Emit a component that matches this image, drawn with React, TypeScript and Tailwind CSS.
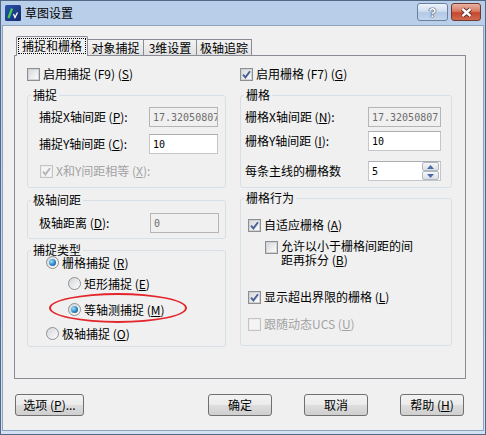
import type { ReactNode } from "react";

const ui = "font-['Noto_Sans_CJK_SC','Noto_Sans',sans-serif]";
const mono = "font-['DejaVu_Sans_Mono',monospace] text-[10px]";

function Check({ checked, disabled }: { checked?: boolean; disabled?: boolean }) {
  return (
    <span
      className={`flex h-[13px] w-[13px] shrink-0 items-center justify-center border bg-white ${
        disabled ? "border-[#c4c4c4]" : "border-[#8e8f8f]"
      }`}
    >
      <span
        className={`flex h-[11px] w-[11px] items-center justify-center border ${
          disabled
            ? "border-[#ececec] bg-[#f4f4f4]"
            : "border-[#cfd3d8] bg-gradient-to-br from-[#d8dadd] to-[#fbfbfb]"
        }`}
      >
        {checked && (
          <svg width="9" height="9" viewBox="0 0 9 9">
            <path
              d="M1 4.6 L3.4 7.4 L8 1.2"
              fill="none"
              stroke={disabled ? "#b4b4b4" : "#4b5f95"}
              strokeWidth="1.9"
            />
          </svg>
        )}
      </span>
    </span>
  );
}

function Radio({ checked }: { checked?: boolean }) {
  return (
    <span className="flex h-[13px] w-[13px] shrink-0 items-center justify-center rounded-full border border-[#8e8f8f] bg-gradient-to-br from-[#d4d6d9] to-[#fdfdfd]">
      {checked && (
        <span className="h-[7px] w-[7px] rounded-full bg-[radial-gradient(circle_at_35%_35%,#9fe0fb,#2a86c8_55%,#0f3f6e)]" />
      )}
    </span>
  );
}

function Field({ value, disabled, w }: { value: string; disabled?: boolean; w: string }) {
  return (
    <div
      className={`flex h-[20px] ${w} shrink-0 items-center overflow-hidden whitespace-nowrap border pl-[3px] ${mono} ${
        disabled
          ? "border-[#b5b5b5] bg-[#f0f0f0] text-[#6d6d6d]"
          : "border-[#c3c6cb] border-t-[#abadb3] bg-white text-black"
      }`}
    >
      {value}
    </div>
  );
}

function SpinBtn({ up }: { up?: boolean }) {
  return (
    <div className="flex h-[9px] w-[17px] items-center justify-center rounded-[2px] border border-[#b2b8c1] bg-gradient-to-b from-[#f7f7f7] to-[#dcdfe3]">
      <svg width="7" height="4" viewBox="0 0 7 4">
        <path d={up ? "M0 4 L3.5 0 L7 4 Z" : "M0 0 L3.5 4 L7 0 Z"} fill="#4d6aa8" />
      </svg>
    </div>
  );
}

function Group({ title, h, mt, children, className = "" }: { title: string; h: string; mt: string; children: ReactNode; className?: string }) {
  return (
    <fieldset className={`relative ${h} ${mt} rounded-[3px] border border-[#d5dfe5]`}>
      <legend className="ml-[3px] px-[2px] text-[12px] leading-[12px]">{title}</legend>
      <div className={`flex flex-col ${className}`}>{children}</div>
    </fieldset>
  );
}

function Btn({ children, w }: { children: ReactNode; w: string }) {
  return (
    <div className={`flex h-[22px] ${w} items-center justify-center rounded-[3px] border border-[#707070] bg-[linear-gradient(#f2f2f2,#ebebeb_48%,#dddddd_52%,#cfcfcf)] text-[12px]`}>
      {children}
    </div>
  );
}

export default function App() {
  return (
    <div className={`flex h-[435px] w-[486px] flex-col border border-[#4f6987] bg-gradient-to-b from-[#b8cee9] to-[#d3e1f2] ${ui} text-black`}>
      {/* title bar */}
      <div className="flex h-[24px] shrink-0 items-start pl-[4px] pr-[4px]">
        <div className="flex h-[24px] items-center">
          <svg width="16" height="16" viewBox="0 0 16 16">
            <defs>
              <linearGradient id="ic" x1="0" y1="0" x2="1" y2="1">
                <stop offset="0" stopColor="#2c55b0" />
                <stop offset="1" stopColor="#13286a" />
              </linearGradient>
            </defs>
            <rect width="16" height="16" rx="1.5" fill="url(#ic)" />
            <path d="M3.5 13 L7 3.5" stroke="#3fd14a" strokeWidth="2.2" />
            <path d="M8.5 9 L10 12.5 L12.5 7.5" stroke="#ffffff" strokeWidth="1.3" fill="none" />
          </svg>
          <span className="ml-[4px] text-[12px] leading-[16px]">草图设置</span>
        </div>
        <div className="ml-auto mt-[2px] flex gap-[3px]">
          <div className="flex h-[18px] w-[31px] items-center justify-center rounded-[3px] border border-[#6a819e] bg-[linear-gradient(#eef4fb,#cfdeef_45%,#b3c9e4_55%,#c3d6ec)]">
            <span className="font-['Liberation_Sans',sans-serif] text-[13px] font-bold leading-[13px] text-white [text-shadow:0_0_1px_#233a5e,0_0_1px_#233a5e,0_0_1px_#233a5e]">
              ?
            </span>
          </div>
          <div className="flex h-[18px] w-[30px] items-center justify-center rounded-[3px] border border-[#6e3b33] bg-[linear-gradient(#eab2a4,#d97a63_45%,#c4472d_55%,#d06a4e)]">
            <svg width="13" height="11" viewBox="0 0 13 11">
              <path d="M2.5 2 L10.5 9 M10.5 2 L2.5 9" stroke="#4a1f18" strokeWidth="4.2" />
              <path d="M2.5 2 L10.5 9 M10.5 2 L2.5 9" stroke="#ffffff" strokeWidth="2.4" />
            </svg>
          </div>
        </div>
      </div>

      {/* body */}
      <div className="mx-[1px] mb-[3px] flex flex-1 flex-col border border-[#8ea3be] bg-[#f0f0f0] pl-[11px] pr-[17px] pt-[10px]">
        {/* tabs */}
        <div className="ml-[2px] flex h-[19px] items-end text-[12px]">
          <div className="relative z-10 -mb-px h-[20px] w-[72px] rounded-t-[2px] border border-b-0 border-[#898c95] bg-[#f0f0f0] px-[1px] pt-[1px]">
            <div className="flex h-[16px] items-center justify-center border border-dotted border-black leading-[14px]">捕捉和栅格</div>
          </div>
          <div className="-ml-px flex h-[16px] w-[57px] items-center justify-center border border-b-0 border-[#898c95] bg-gradient-to-b from-[#f3f3f3] to-[#e2e2e2] leading-[14px]">对象捕捉</div>
          <div className="-ml-px flex h-[16px] w-[54px] items-center justify-center border border-b-0 border-[#898c95] bg-gradient-to-b from-[#f3f3f3] to-[#e2e2e2] leading-[14px]">3维设置</div>
          <div className="-ml-px flex h-[16px] w-[56px] items-center justify-center border border-b-0 border-[#898c95] bg-gradient-to-b from-[#f3f3f3] to-[#e2e2e2] leading-[14px]">极轴追踪</div>
        </div>

        {/* panel */}
        <div className="grid h-[324px] grid-cols-[199px_212px] gap-x-[14px] border border-[#898c95] bg-[#f0f0f0] pl-[12px] pr-[12px] pt-[10px] text-[12px]">
          {/* left column */}
          <div className="flex flex-col">
            <div className="flex h-[16px] items-center gap-[3px]">
              <Check />
              <span>
                启用捕捉 (F9) (<u>S</u>)
              </span>
            </div>

            <Group title="捕捉" h="h-[99px]" mt="mt-[7px]" className="pl-[11px] pt-[6px]">
              <div className="flex h-[20px] items-center">
                <span className="w-[110px]">
                  捕捉X轴间距 (<u>P</u>):
                </span>
                <Field value="17.32050807" disabled w="w-[69px]" />
              </div>
              <div className="mt-[7px] flex h-[20px] items-center">
                <span className="w-[110px]">
                  捕捉Y轴间距 (<u>C</u>):
                </span>
                <Field value="10" w="w-[69px]" />
              </div>
              <div className="ml-px mt-[10px] flex h-[14px] items-center gap-[3px] text-[#a3a3a3]">
                <Check checked disabled />
                <span>
                  X和Y间距相等 (<u>X</u>):
                </span>
              </div>
            </Group>

            <Group title="极轴间距" h="h-[45px]" mt="mt-[6px]" className="pl-[11px] pt-[7px]">
              <div className="flex h-[20px] items-center">
                <span className="w-[111px]">
                  极轴距离 (<u>D</u>):
                </span>
                <Field value="0" disabled w="w-[69px]" />
              </div>
            </Group>

            <Group title="捕捉类型" h="h-[103px]" mt="mt-[5px]" className="pl-[18px]">
              <div className="flex h-[13px] items-center gap-[3px] leading-[13px]">
                <Radio checked />
                <span>
                  栅格捕捉 (<u>R</u>)
                </span>
              </div>
              <div className="ml-[22px] mt-[8px] flex h-[13px] items-center gap-[3px] leading-[13px]">
                <Radio />
                <span>
                  矩形捕捉 (<u>E</u>)
                </span>
              </div>
              <div className="ml-[22px] mt-[13px] flex h-[13px] items-center gap-[3px] leading-[13px]">
                <Radio checked />
                <span>
                  等轴测捕捉 (<u>M</u>)
                </span>
              </div>
              <div className="mt-[11px] flex h-[13px] items-center gap-[3px] leading-[13px]">
                <Radio />
                <span>
                  极轴捕捉 (<u>O</u>)
                </span>
              </div>
              {/* red annotation ring */}
              <div className="pointer-events-none absolute left-[21px] top-[37px] h-[30px] w-[138px] rounded-[50%] border-2 border-[#e3262b]" />
            </Group>
          </div>

          {/* right column */}
          <div className="flex flex-col">
            <div className="flex h-[16px] items-center gap-[3px]">
              <Check checked />
              <span>
                启用栅格 (F7) (<u>G</u>)
              </span>
            </div>

            <Group title="栅格" h="h-[99px]" mt="mt-[7px]" className="pl-[4px] pt-[6px]">
              <div className="flex h-[20px] items-center">
                <span className="w-[123px]">
                  栅格X轴间距 (<u>N</u>):
                </span>
                <Field value="17.32050807" disabled w="w-[73px]" />
              </div>
              <div className="mt-[4px] flex h-[20px] items-center">
                <span className="w-[123px]">
                  栅格Y轴间距 (<u>I</u>):
                </span>
                <Field value="10" w="w-[73px]" />
              </div>
              <div className="mt-[10px] flex h-[20px] items-center">
                <span className="w-[123px]">每条主线的栅格数</span>
                <div className={`flex h-[20px] w-[73px] items-center border border-[#c3c6cb] border-t-[#abadb3] bg-white pl-[3px] ${mono}`}>
                  <span className="flex-1">5</span>
                  <div className="mr-px flex flex-col">
                    <SpinBtn up />
                    <SpinBtn />
                  </div>
                </div>
              </div>
            </Group>

            <Group title="栅格行为" h="h-[154px]" mt="mt-[4px]" className="pl-[7px] pt-[14px]">
              <div className="flex h-[14px] items-center gap-[3px]">
                <Check checked />
                <span>
                  自适应栅格 (<u>A</u>)
                </span>
              </div>
              <div className="ml-[17px] mt-[7px] flex items-start gap-[3px]">
                <span className="mt-[2px]">
                  <Check />
                </span>
                <div className="flex flex-col leading-[14px]">
                  <span className="h-[14px]">允许以小于栅格间距的间</span>
                  <span className="h-[14px]">
                    距再拆分 (<u>B</u>)
                  </span>
                </div>
              </div>
              <div className="mt-[23px] flex h-[14px] items-center gap-[3px]">
                <Check checked />
                <span>
                  显示超出界限的栅格 (<u>L</u>)
                </span>
              </div>
              <div className="mt-[13px] flex h-[14px] items-center gap-[3px] text-[#a3a3a3]">
                <Check disabled />
                <span>
                  跟随动态UCS (<u>U</u>)
                </span>
              </div>
            </Group>
          </div>
        </div>

        {/* bottom buttons */}
        <div className="mt-[15px] flex">
          <div className="ml-px">
            <Btn w="w-[69px]">
              <span>
                选项 (<u>P</u>)...
              </span>
            </Btn>
          </div>
          <div className="ml-auto mr-[2px] flex gap-[32px]">
            <Btn w="w-[64px]">确定</Btn>
            <Btn w="w-[64px]">取消</Btn>
            <Btn w="w-[64px]">
              <span>
                帮助 (<u>H</u>)
              </span>
            </Btn>
          </div>
        </div>
      </div>
    </div>
  );
}
